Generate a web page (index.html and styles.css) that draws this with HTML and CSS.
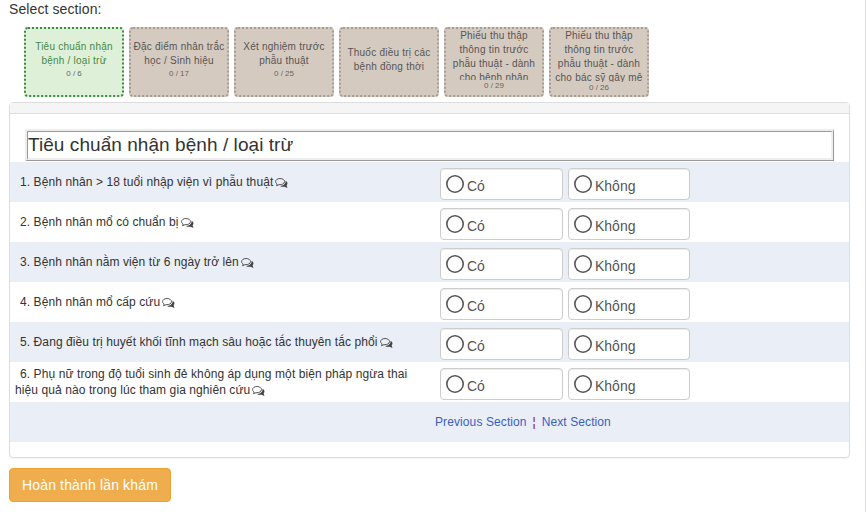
FILE: index.html
```html
<!DOCTYPE html>
<html lang="vi">
<head>
<meta charset="utf-8">
<title>Select section</title>
<link rel="stylesheet" href="styles.css">
</head>
<body>
<svg class="defs" width="0" height="0" aria-hidden="true">
  <symbol id="chat" viewBox="0 0 13 12">
    <path d="M5 1.5C2.5 1.5.6 2.8.6 4.6c0 1 .6 1.8 1.6 2.4L1.5 8.7 4 7.7c3.200.2 5.500-1.200 5.500-3.100 0-1.800-2-3.100-4.500-3.100z" fill="none" stroke="#444" stroke-width=".9"/>
    <path d="M10.500 3.700C12.900 4.900 13 7 11.600 8.300L12.500 10.900 9.500 9.700C7.800 10 6 9.700 5 8.900 8.700 8.700 11 6.500 10.500 3.700z" fill="#444"/>
  </symbol>
</svg>
<main class="page">
  <div class="select-label">Select section:</div>
  <nav class="sections">
    <div class="section active"><span class="name">Tiêu chuẩn nhận<br>bệnh / loại trừ</span><span class="count">0 / 6</span></div>
    <div class="section"><span class="name">Đặc điểm nhân trắc<br>học / Sinh hiệu</span><span class="count">0 / 17</span></div>
    <div class="section"><span class="name">Xét nghiệm trước<br>phẫu thuật</span><span class="count">0 / 25</span></div>
    <div class="section low"><span class="name">Thuốc điều trị các<br>bệnh đồng thời</span></div>
    <div class="section tall"><span class="name">Phiếu thu thập<br>thông tin trước<br>phẫu thuật - dành<br>cho bệnh nhân</span><span class="count">0 / 29</span></div>
    <div class="section tall taller"><span class="name">Phiếu thu thập<br>thông tin trước<br>phẫu thuật - dành<br>cho bác sỹ gây mê</span><span class="count">0 / 26</span></div>
  </nav>
  <section class="panel">
    <div class="panel-head"></div>
    <div class="title"><h1>Tiêu chuẩn nhận bệnh / loại trừ</h1></div>
    <div class="row"><p class="question">1. Bệnh nhân &gt; 18 tuổi nhập viện vì phẫu thuật<svg class="chat"><use href="#chat"/></svg></p><label class="choice yes"><i class="radio"></i><span>Có</span></label><label class="choice"><i class="radio"></i><span>Không</span></label></div>
    <div class="row"><p class="question">2. Bệnh nhân mổ có chuẩn bị<svg class="chat"><use href="#chat"/></svg></p><label class="choice yes"><i class="radio"></i><span>Có</span></label><label class="choice"><i class="radio"></i><span>Không</span></label></div>
    <div class="row"><p class="question">3. Bệnh nhân nằm viện từ 6 ngày trở lên<svg class="chat"><use href="#chat"/></svg></p><label class="choice yes"><i class="radio"></i><span>Có</span></label><label class="choice"><i class="radio"></i><span>Không</span></label></div>
    <div class="row"><p class="question">4. Bệnh nhân mổ cấp cứu<svg class="chat"><use href="#chat"/></svg></p><label class="choice yes"><i class="radio"></i><span>Có</span></label><label class="choice"><i class="radio"></i><span>Không</span></label></div>
    <div class="row"><p class="question">5. Đang điều trị huyết khối tĩnh mạch sâu hoặc tắc thuyên tắc phổi<svg class="chat"><use href="#chat"/></svg></p><label class="choice yes"><i class="radio"></i><span>Có</span></label><label class="choice"><i class="radio"></i><span>Không</span></label></div>
    <div class="row"><p class="question">6. Phụ nữ trong độ tuổi sinh đẻ không áp dụng một biện pháp ngừa thai<br>hiệu quả nào trong lúc tham gia nghiên cứu<svg class="chat"><use href="#chat"/></svg></p><label class="choice yes"><i class="radio"></i><span>Có</span></label><label class="choice"><i class="radio"></i><span>Không</span></label></div>
    <div class="row links"><a>Previous Section</a><b>¦</b><a>Next Section</a></div>
  </section>
  <button class="finish">Hoàn thành lần khám</button>
</main>
</body>
</html>
```
FILE: styles.css
```css
* { box-sizing: border-box; }
body {
  margin: 0;
  background: #fff;
  color: #333;
  font-family: "Liberation Sans", Arial, sans-serif;
  overflow: hidden;
}
.defs { display: block; }
.page {
  width: 866px;
  height: 512px;
  padding-left: 9px;
  border-right: 1px solid #ddd;
}
.select-label {
  height: 27px;
  font-size: 14px;
  line-height: 18px;
  letter-spacing: 0.1px;
}
.sections { display: flex; gap: 5px; padding-left: 15px; height: 75px; }
.section {
  width: 100px;
  height: 70px;
  padding-top: 11px;
  border: 2px dotted #a99d92;
  border-radius: 4px;
  background: #d5cac0;
  color: #555;
  text-align: center;
  font-size: 10px;
  line-height: 14px;
  letter-spacing: 0.23px;
  white-space: nowrap;
}
.section.active { background: #dff0d8; border-color: #3c8b40; color: #468847; }
.section.low { padding-top: 17px; }
.section.tall { padding-top: 0; }
.name { display: block; }
.tall .name { height: 51px; overflow: hidden; }
.taller .name { height: 53px; }
.count { display: block; font-size: 8px; line-height: 12px; letter-spacing: 0; color: #666; }
.tall .count { line-height: 11px; }
.panel {
  width: 841px;
  height: 356px;
  border: 1px solid #ddd;
  border-radius: 4px;
  box-shadow: 0 1px 1px rgba(0, 0, 0, 0.05);
}
.panel-head { height: 11px; background: #f5f5f5; border-bottom: 1px solid #ddd; }
.title {
  width: 809px;
  height: 32px;
  margin: 15px 0 1px 15px;
  border: solid;
  border-width: 2px 1px 1px 2px;
  border-color: #eee #999 #999 #eee;
}
.title h1 {
  height: 29px;
  margin: 0;
  border: solid;
  border-width: 1px 2px 2px 1px;
  border-color: #999 #eee #eee #999;
  font-size: 19px;
  font-weight: normal;
  line-height: 26px;
  letter-spacing: 0.06px;
}
.row { display: flex; height: 40px; }
.row:nth-child(odd) { background: #eaeef6; }
.question {
  width: 430px;
  margin: 0;
  padding-left: 5px;
  align-self: center;
  font-size: 12px;
  line-height: 16px;
  letter-spacing: 0.09px;
  text-indent: 5px;
  white-space: nowrap;
}
.chat { width: 13px; height: 12px; margin-left: 2px; vertical-align: -3px; }
.choice {
  display: flex;
  width: 122px;
  height: 32px;
  margin-top: 6px;
  padding-left: 5px;
  border: 1px solid #ccc;
  border-radius: 4px;
  background: #fff;
  box-shadow: inset 0 1px 1px rgba(0, 0, 0, 0.075);
  color: #555;
  font-size: 14px;
  line-height: 34px;
}
.choice.yes { width: 123px; margin-right: 5px; }
.radio {
  width: 18px;
  height: 18px;
  margin: 6px 3px 0 0;
  border-radius: 50%;
  box-shadow: inset 0 0 0 1.6px #555;
}
.links {
  padding-left: 425px;
  font-size: 12px;
  line-height: 40px;
  letter-spacing: 0.1px;
}
.links a { color: #3a5fc0; }
.links b { width: 15px; text-align: center; font-weight: normal; color: #800040; }
.finish {
  display: block;
  width: 162px;
  height: 34px;
  margin-top: 10px;
  padding: 0;
  border: 1px solid #eea236;
  border-radius: 4px;
  background: #f0ad4e;
  color: #fff;
  font: 14px "Liberation Sans", Arial, sans-serif;
  letter-spacing: 0.15px;
}
```
